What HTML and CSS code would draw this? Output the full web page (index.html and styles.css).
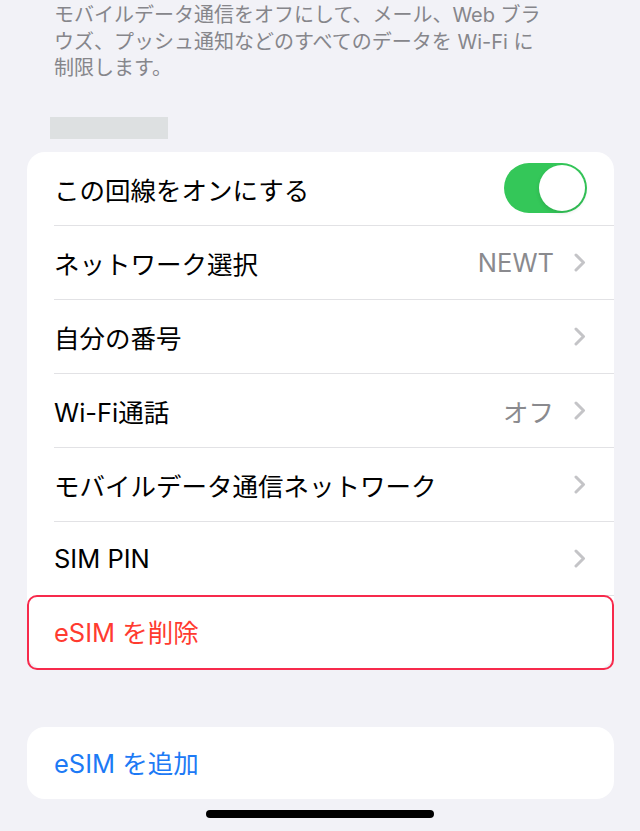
FILE: index.html
```html
<!DOCTYPE html>
<html lang="ja">
<head>
<meta charset="UTF-8">
<meta name="viewport" content="width=device-width, initial-scale=1.0">
<title>モバイル通信</title>
<link rel="stylesheet" href="styles.css">
</head>
<body>
<div class="page">
    <!-- footer note of the previous group -->
    <p class="note">モバイルデータ通信をオフにして、メール、Web ブラ<br>ウズ、プッシュ通知などのすべてのデータを Wi-Fi に<br>制限します。</p>

    <div class="group-title"></div>

    <div class="card">
        <div class="row">
            <div class="row-inner">
                <span class="label">この回線をオンにする</span>
                <span class="toggle on"><span class="knob"></span></span>
            </div>
        </div>
        <div class="row">
            <div class="row-inner">
                <span class="label">ネットワーク選択</span>
                <span class="value">NEWT</span>
                <svg class="chevron" width="12" height="19" viewBox="0 0 12 19"><polyline points="2,2 9.5,9.5 2,17"/></svg>
            </div>
        </div>
        <div class="row">
            <div class="row-inner">
                <span class="label">自分の番号</span>
                <svg class="chevron" width="12" height="19" viewBox="0 0 12 19"><polyline points="2,2 9.5,9.5 2,17"/></svg>
            </div>
        </div>
        <div class="row">
            <div class="row-inner">
                <span class="label">Wi-Fi通話</span>
                <span class="value">オフ</span>
                <svg class="chevron" width="12" height="19" viewBox="0 0 12 19"><polyline points="2,2 9.5,9.5 2,17"/></svg>
            </div>
        </div>
        <div class="row">
            <div class="row-inner">
                <span class="label">モバイルデータ通信ネットワーク</span>
                <svg class="chevron" width="12" height="19" viewBox="0 0 12 19"><polyline points="2,2 9.5,9.5 2,17"/></svg>
            </div>
        </div>
        <div class="row">
            <div class="row-inner">
                <span class="label">SIM PIN</span>
                <svg class="chevron" width="12" height="19" viewBox="0 0 12 19"><polyline points="2,2 9.5,9.5 2,17"/></svg>
            </div>
        </div>
        <div class="row highlight">
            <div class="row-inner">
                <span class="label danger">eSIM を削除</span>
            </div>
        </div>
    </div>

    <div class="card card-add">
        <div class="row">
            <div class="row-inner">
                <span class="label link">eSIM を追加</span>
            </div>
        </div>
    </div>

    <div class="home-bar"></div>
</div>
</body>
</html>
```

FILE: styles.css
```css
body {
    margin: 0;
    background: #f2f2f7;
    font-family: "Inter", "Noto Sans CJK JP", sans-serif;
    color: #000;
}

.page {
    width: 640px;
    height: 831px;
    overflow: hidden;
    padding-top: 2px;
    box-sizing: border-box;
}

.note {
    margin: 0;
    padding-left: 54px;
    font-size: 20px;
    line-height: 26.5px;
    color: #86868b;
}

.group-title {
    width: 118px;
    height: 22px;
    margin: 35px 0 13px 50px;
    background: #dde0e1;
}

.card {
    margin: 0 26px 0 27px;
    background: #fff;
    border-radius: 18px;
}

.row {
    position: relative;
    padding-left: 27px;
}

.row-inner {
    display: flex;
    align-items: center;
    height: 73px;
    padding-right: 28px;
    border-bottom: 1px solid #e2e2e5;
}

.row:last-child .row-inner {
    border-bottom: none;
}

.label {
    flex: 1;
    font-size: 25.5px;
    padding-top: 1px;
}

.value {
    font-size: 25.5px;
    color: #8a8a8e;
    margin-right: 20px;
    padding-top: 1px;
}

.chevron {
    fill: none;
    stroke: #c4c4c7;
    stroke-width: 3;
    stroke-linecap: round;
    stroke-linejoin: round;
}

.toggle {
    position: relative;
    width: 83px;
    height: 50px;
    border-radius: 25px;
    background: #e5e5ea;
    margin-right: -1px;
}

.toggle.on {
    background: #34c759;
}

.toggle .knob {
    position: absolute;
    top: 2px;
    left: 2px;
    width: 46px;
    height: 46px;
    border-radius: 50%;
    background: #fff;
    box-shadow: 0 2px 4px rgba(0, 0, 0, 0.12);
}

.toggle.on .knob {
    left: 35px;
}

/* red outline drawn over the delete row */
.highlight::after {
    content: "";
    position: absolute;
    top: -1px;
    left: 0;
    right: 0;
    bottom: -1px;
    border: 2.5px solid #f72a4c;
    border-radius: 10px;
}

.highlight .label {
    padding-top: 0;
    margin-top: -4px;
}

.danger {
    color: #ff3b30;
}

.link {
    color: #1d7af5;
}

.card-add {
    margin-top: 58px;
}

.card-add .row-inner {
    height: 72px;
}

.card-add .label {
    padding-top: 0;
    margin-top: -3px;
}

.home-bar {
    width: 228px;
    height: 8px;
    margin: 11px auto 0;
    border-radius: 4px;
    background: #000;
}
```
